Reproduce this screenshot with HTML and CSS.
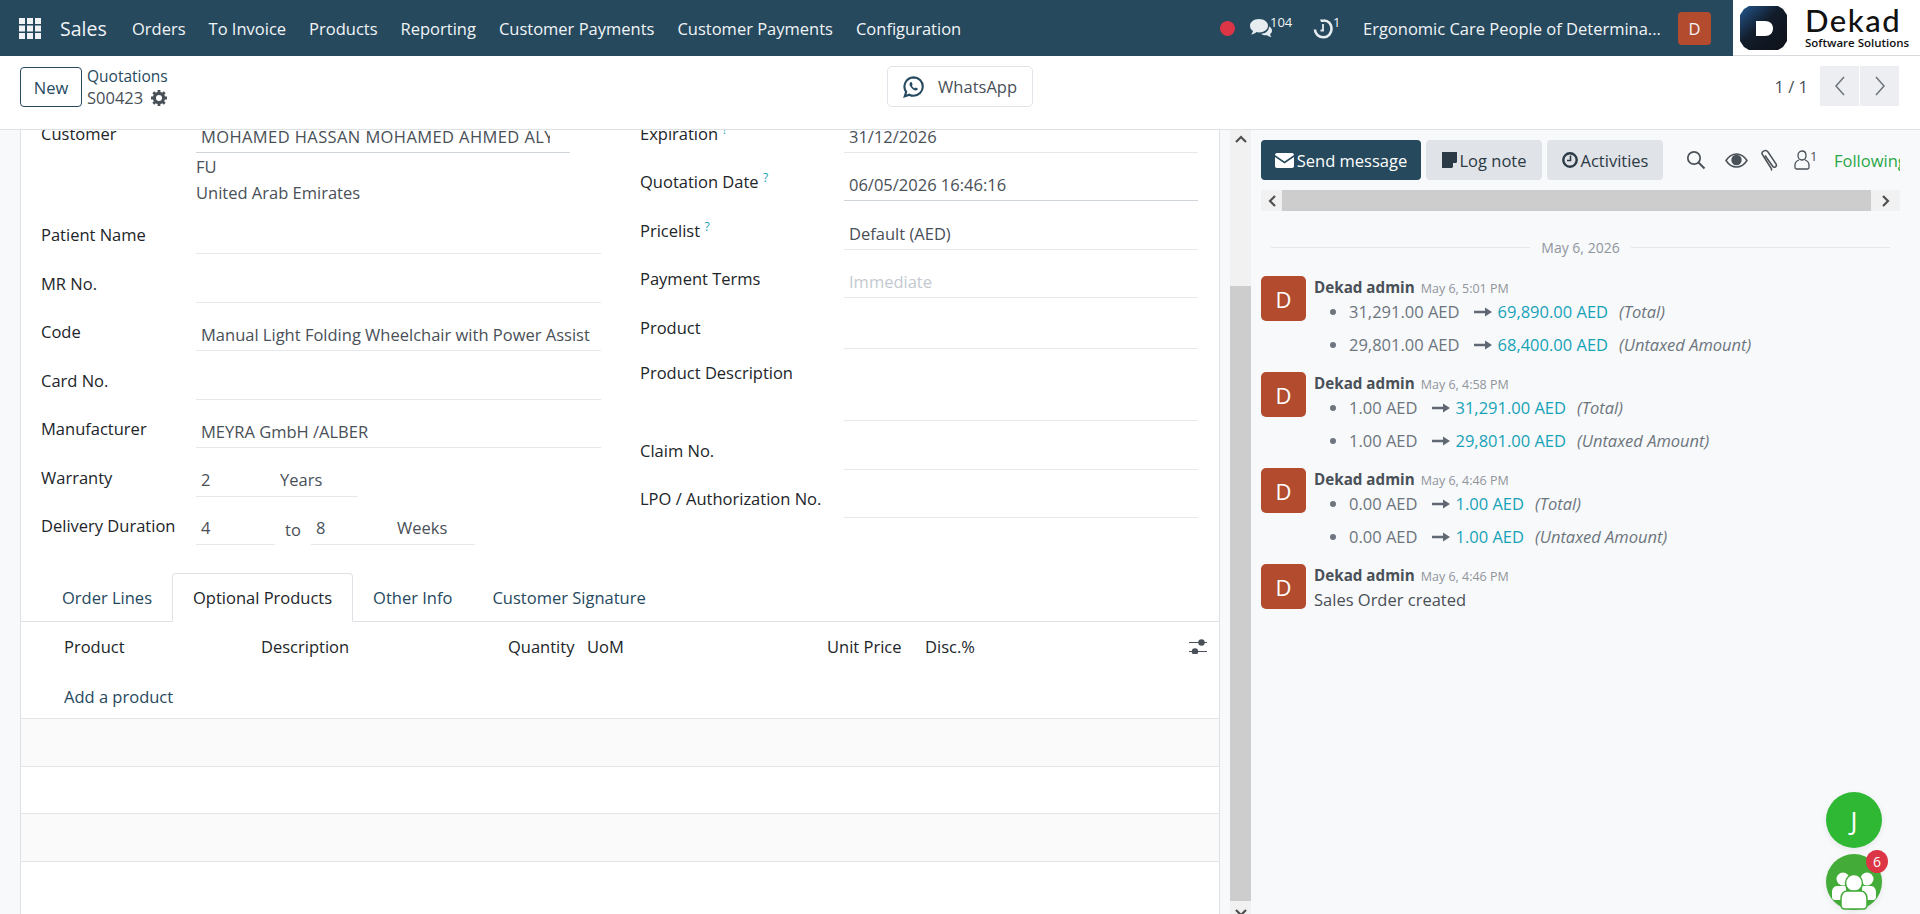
FILE: index.html
```html
<!DOCTYPE html>
<html>
<head>
    <title>S00423 - Sales</title>
    <meta charset="UTF-8" />
    <link rel="stylesheet" href="styles.css">
</head>
<body>
    <svg class="defs" width="0" height="0">
        <symbol id="arrow" viewBox="0 0 18 12"><path d="M0 4.800h11V1.500L18 6l-7 4.500V7.200H0z" fill="#5f6873"/></symbol>
    </svg>

    <header class="navbar">
        <svg class="apps" width="22" height="21" viewBox="0 0 22 21"><path fill="#f1f4f6" d="M0 0h6v6H0zM8 0h6v6H8zM16 0h6v6h-6zM0 7.500h6v6H0zM8 7.500h6v6H8zM16 7.500h6v6h-6zM0 15h6v6H0zM8 15h6v6H8zM16 15h6v6h-6z"/></svg>
        <a class="brand">Sales</a>
        <nav class="menu">
            <a>Orders</a>
            <a>To Invoice</a>
            <a>Products</a>
            <a>Reporting</a>
            <a>Customer Payments</a>
            <a>Customer Payments</a>
            <a>Configuration</a>
        </nav>
        <div class="systray">
            <span class="dot"></span>
            <span class="tray msgs">
                <svg width="24" height="20" viewBox="0 0 24 20"><path fill="#e6ecef" d="M10 1c5 0 9 2.900 9 6.700s-4 6.700-9 6.700c-1 0-1.700-.1-2.500-.3C6 15.500 4 16.300 2 16.500c1-1 1.800-2.200 2-3.500C2 11.700 1 9.800 1 7.700 1 3.900 5 1 10 1z"/><path fill="#e6ecef" d="M20 8.500c2 1 3 2.500 3 4.200 0 1.400-.8 2.700-2 3.600.2 1 .8 2 1.600 2.700-1.800-.2-3.300-.9-4.500-1.800-2 .3-4.500-.1-6-1.500 4 0 8-2.500 7.900-7.200z"/></svg>
                <sup>104</sup>
            </span>
            <span class="tray activity">
                <svg width="20" height="21" viewBox="0 0 20 21"><path fill="none" stroke="#e6ecef" stroke-width="2.600" d="M11 2.500c4.500 0 7.500 3.500 7.500 8a8.300 8.300 0 0 1-16.600 1"/><path fill="none" stroke="#e6ecef" stroke-width="1.800" d="M10 6v6.500H7.500"/><path fill="#e6ecef" d="M7 1.500h4v2.500H8z"/></svg>
                <sup>1</sup>
            </span>
            <span class="company">Ergonomic Care People of Determina...</span>
            <span class="avatar-small">D</span>
        </div>
        <div class="logo">
            <svg width="47" height="44" viewBox="0 0 47 44">
                <defs><linearGradient id="lg" x1="0" y1="0" x2="1" y2="1"><stop offset="0" stop-color="#24588f"/><stop offset=".45" stop-color="#121c2a"/><stop offset="1" stop-color="#0e1118"/></linearGradient></defs>
                <path fill="url(#lg)" d="M9 0h29l5 3 4 6v26l-4 6-5 3H9l-5-3-4-6V9l4-6z"/>
                <path fill="#fff" d="M16 15h9c5 0 8 3 8 7.500S30 30 25 30h-9z"/>
            </svg>
            <div class="logo-text">
                <div class="logo-name">Dekad</div>
                <div class="logo-sub">Software Solutions</div>
            </div>
        </div>
    </header>

    <div class="control-panel">
        <div class="cp-left">
            <button class="btn-new">New</button>
            <div class="crumbs">
                <div class="crumb-parent">Quotations</div>
                <div class="crumb-current">S00423
                    <svg width="16" height="16" viewBox="0 0 16 16"><circle cx="8" cy="8" r="4.600" fill="none" stroke="#495057" stroke-width="3.200"/><path stroke="#495057" stroke-width="2.800" d="M8 0v3M8 13v3M0 8h3M13 8h3M2.300 2.300l2 2M11.700 11.700l2 2M2.300 13.700l2-2M11.700 4.300l2-2"/></svg>
                </div>
            </div>
        </div>
        <button class="btn-whatsapp">
            <svg width="24" height="26" viewBox="0 0 24 26"><path fill="none" stroke="#264a5f" stroke-width="2.400" d="M12 2a10.500 10.500 0 0 1 0 21c-1.800 0-3.400-.4-4.800-1.200L2 23.500l1.600-5A10.500 10.500 0 0 1 12 2z"/><path fill="#264a5f" d="M8.500 7.500c-1.500 1-1.500 3 .3 5.500s4.500 4.500 6.700 3.800c1-.3 1.500-1.300 1.300-2l-2.500-1.300-1 1c-1-.3-2.800-2-3.200-3.300l.9-1L9.700 7.400c-.4-.2-.9-.1-1.200.1z"/></svg>
            WhatsApp
        </button>
        <div class="pager">
            <span class="pager-count">1 / 1</span>
            <span class="pager-btn"><svg width="12" height="20" viewBox="0 0 12 20"><path fill="none" stroke="#6c757d" stroke-width="1.500" d="M10 1L2 10l8 9"/></svg></span>
            <span class="pager-btn"><svg width="12" height="20" viewBox="0 0 12 20"><path fill="none" stroke="#6c757d" stroke-width="1.500" d="M2 1l8 9-8 9"/></svg></span>
        </div>
    </div>

    <div class="content">
        <main class="form-view">
            <div class="sheet">
                <div class="groups">
                    <div class="group group-left">
                        <div class="field"><label>Customer</label><div class="value focus short"><span class="clip">MOHAMED HASSAN MOHAMED AHMED ALY</span></div></div>
                        <div class="address"><div>FU</div><div>United Arab Emirates</div></div>
                        <div class="field"><label>Patient Name</label><div class="value"></div></div>
                        <div class="field"><label>MR No.</label><div class="value"></div></div>
                        <div class="field"><label>Code</label><div class="value">Manual Light Folding Wheelchair with Power Assist</div></div>
                        <div class="field"><label>Card No.</label><div class="value"></div></div>
                        <div class="field"><label>Manufacturer</label><div class="value">MEYRA GmbH /ALBER</div></div>
                        <div class="field"><label>Warranty</label>
                            <div class="value v-num">2</div>
                            <div class="value v-unit">Years</div>
                        </div>
                        <div class="field"><label>Delivery Duration</label>
                            <div class="value v-from">4</div>
                            <span class="to">to</span>
                            <div class="value v-to">8</div>
                            <div class="value v-weeks">Weeks</div>
                        </div>
                    </div>
                    <div class="group group-right">
                        <div class="field"><label>Expiration <sup class="help">?</sup></label><div class="value">31/12/2026</div></div>
                        <div class="field"><label>Quotation Date <sup class="help">?</sup></label><div class="value focus">06/05/2026 16:46:16</div></div>
                        <div class="field"><label>Pricelist <sup class="help">?</sup></label><div class="value">Default (AED)</div></div>
                        <div class="field field-terms"><label>Payment Terms</label><div class="value placeholder">Immediate</div></div>
                        <div class="field field-product"><label>Product</label><div class="value"></div></div>
                        <div class="field field-desc"><label>Product Description</label><div class="value"></div></div>
                        <div class="field field-claim"><label>Claim No.</label><div class="value"></div></div>
                        <div class="field field-claim"><label>LPO / Authorization No.</label><div class="value"></div></div>
                    </div>
                </div>

                <div class="tabs">
                    <a>Order Lines</a>
                    <a class="active">Optional Products</a>
                    <a>Other Info</a>
                    <a>Customer Signature</a>
                </div>

                <div class="table-head">
                    <span class="col-product">Product</span>
                    <span class="col-desc">Description</span>
                    <span class="col-qty">Quantity</span>
                    <span class="col-uom">UoM</span>
                    <span class="col-price">Unit Price</span>
                    <span class="col-disc">Disc.%</span>
                    <svg class="col-opts" width="19" height="15" viewBox="0 0 19 15"><path stroke="#495057" stroke-width="1" d="M0 3.500h18M0 12.500h18"/><circle cx="12.500" cy="3.500" r="3.200" fill="#495057"/><circle cx="6" cy="12.500" r="3.200" fill="#495057"/></svg>
                </div>
                <div class="add-line"><a>Add a product</a></div>
                <div class="row row-odd"></div>
                <div class="row"></div>
                <div class="row row-odd"></div>
                <div class="row row-last"></div>
            </div>
        </main>

        <div class="scrollbar">
            <span class="sb-up"><svg width="12" height="8" viewBox="0 0 12 8"><path fill="none" stroke="#505050" stroke-width="2.200" d="M1 7l5-5 5 5"/></svg></span>
            <div class="sb-gap"></div>
            <div class="sb-thumb"></div>
            <span class="sb-down"><svg width="12" height="8" viewBox="0 0 12 8"><path fill="none" stroke="#505050" stroke-width="2.200" d="M1 1l5 5 5-5"/></svg></span>
        </div>

        <aside class="chatter">
            <div class="chatter-top">
                <button class="btn-chat btn-send">
                    <svg width="19" height="15" viewBox="0 0 19 15"><path fill="#fff" d="M0 2c0-1 .8-2 2-2h15c1.200 0 2 1 2 2L9.500 8.500zM0 4l9.500 6.500L19 4v9c0 1-.8 2-2 2H2c-1.200 0-2-1-2-2z"/></svg>
                    Send message</button>
                <button class="btn-chat">
                    <svg width="15" height="16" viewBox="0 0 15 16"><path fill="#2b3a45" d="M0 0h15v10l-5 6H0z"/><path fill="#e0e3e7" d="M11 16v-5h4z"/></svg>
                    Log note</button>
                <button class="btn-chat">
                    <svg width="16" height="16" viewBox="0 0 16 16"><circle cx="8" cy="8" r="6.700" fill="none" stroke="#2b3a45" stroke-width="2.400"/><path fill="none" stroke="#2b3a45" stroke-width="1.600" d="M8.500 3.500v5H5"/></svg>
                    Activities</button>
                <div class="chat-tools">
                    <svg class="t-search" width="20" height="20" viewBox="0 0 20 20"><circle cx="8" cy="8" r="6.200" fill="none" stroke="#495057" stroke-width="1.700"/><path stroke="#495057" stroke-width="2" d="M12.500 12.500l6 6"/></svg>
                    <svg class="t-eye" width="23" height="15" viewBox="0 0 23 15"><path fill="none" stroke="#495057" stroke-width="1.500" d="M1 7.500C4 3 7.500 1 11.500 1s7.500 2 10.500 6.500C19 12 15.500 14 11.500 14S4 12 1 7.500z"/><circle cx="11.500" cy="7" r="5.200" fill="#495057"/></svg>
                    <svg class="t-clip" width="20" height="23" viewBox="0 0 20 23"><path fill="none" stroke="#495057" stroke-width="1.500" d="M6 6.500l7.500 10.500c1.800 2.500 5 .5 3.500-2.200L9 3C7 .3 2.500 2 3 5l8 12.500c1 1.500 2.500 3 1 4"/></svg>
                    <span class="t-user">
                        <svg width="16" height="20" viewBox="0 0 16 20"><path fill="none" stroke="#495057" stroke-width="1.300" d="M8 1c2.500 0 4 2 4 4.500S10.500 10 8 10 4 8 4 5.500 5.500 1 8 1zM5 10c-2.500 1-4 2.500-4 5v2.500c0 .8.500 1.500 1.500 1.500h11c1 0 1.500-.7 1.500-1.500V15c0-2.500-1.500-4-4-5"/></svg>
                        <sup>1</sup>
                    </span>
                    <span class="following">Following</span>
                </div>
            </div>

            <div class="h-scroll">
                <span class="hs-btn"><svg width="8" height="12" viewBox="0 0 8 12"><path fill="none" stroke="#505050" stroke-width="2.200" d="M7 1L2 6l5 5"/></svg></span>
                <div class="hs-thumb"></div>
                <span class="hs-btn hs-right"><svg width="8" height="12" viewBox="0 0 8 12"><path fill="none" stroke="#505050" stroke-width="2.200" d="M1 1l5 5-5 5"/></svg></span>
            </div>

            <div class="date-sep"><span>May 6, 2026</span></div>

            <div class="message">
                <div class="msg-avatar">D</div>
                <div class="msg-body">
                    <div class="msg-head"><b>Dekad admin</b><span>May 6, 5:01 PM</span></div>
                    <ul>
                        <li><span class="old">31,291.00 AED</span><svg class="arr"><use href="#arrow"/></svg><span class="new">69,890.00 AED</span><i>(Total)</i></li>
                        <li><span class="old">29,801.00 AED</span><svg class="arr"><use href="#arrow"/></svg><span class="new">68,400.00 AED</span><i>(Untaxed Amount)</i></li>
                    </ul>
                </div>
            </div>
            <div class="message">
                <div class="msg-avatar">D</div>
                <div class="msg-body">
                    <div class="msg-head"><b>Dekad admin</b><span>May 6, 4:58 PM</span></div>
                    <ul>
                        <li><span class="old">1.00 AED</span><svg class="arr"><use href="#arrow"/></svg><span class="new">31,291.00 AED</span><i>(Total)</i></li>
                        <li><span class="old">1.00 AED</span><svg class="arr"><use href="#arrow"/></svg><span class="new">29,801.00 AED</span><i>(Untaxed Amount)</i></li>
                    </ul>
                </div>
            </div>
            <div class="message">
                <div class="msg-avatar">D</div>
                <div class="msg-body">
                    <div class="msg-head"><b>Dekad admin</b><span>May 6, 4:46 PM</span></div>
                    <ul>
                        <li><span class="old">0.00 AED</span><svg class="arr"><use href="#arrow"/></svg><span class="new">1.00 AED</span><i>(Total)</i></li>
                        <li><span class="old">0.00 AED</span><svg class="arr"><use href="#arrow"/></svg><span class="new">1.00 AED</span><i>(Untaxed Amount)</i></li>
                    </ul>
                </div>
            </div>
            <div class="message">
                <div class="msg-avatar">D</div>
                <div class="msg-body">
                    <div class="msg-head"><b>Dekad admin</b><span>May 6, 4:46 PM</span></div>
                    <div class="msg-text">Sales Order created</div>
                </div>
            </div>
        </aside>
    </div>

    <div class="fab fab-j">J</div>
    <div class="fab fab-group">
        <svg width="48" height="44" viewBox="0 0 48 44">
            <circle cx="13" cy="13" r="6.500" fill="#fff"/>
            <circle cx="37" cy="13" r="6.500" fill="#fff"/>
            <path fill="#fff" d="M7 20h9v14H5c-2 0-3-1-3-3v-5c0-3 2-6 5-6zM32 20h9c3 0 5 3 5 6v5c0 2-1 3-3 3H32z"/>
            <circle cx="24" cy="17" r="8.500" fill="#fff" stroke="#43ab38" stroke-width="1.500"/>
            <path fill="#fff" stroke="#43ab38" stroke-width="1.500" d="M17 25h14c4 0 6 4 6 8v6c0 2-1 4-4 4H15c-3 0-4-2-4-4v-6c0-4 2-8 6-8z"/>
        </svg>
        <span class="fab-badge">6</span>
    </div>
</body>
</html>
```

FILE: styles.css
```css
* {
    box-sizing: border-box;
}

html, body {
    height: 100%;
}

body {
    margin: 0;
    height: 914px;
    overflow: hidden;
    display: flex;
    flex-direction: column;
    font-family: "Open Sans", "Noto Sans", sans-serif;
    font-size: 16.500px;
    color: #212529;
    background: #f8f9fb;
}

.defs {
    position: absolute;
}

sup {
    font-size: 13px;
    line-height: 1;
}

/* top bar */
.navbar {
    display: flex;
    align-items: center;
    height: 56px;
    flex: none;
    background: #26495e;
    color: #f1f4f6;
    padding-left: 19px;
}

.brand {
    font-size: 19.500px;
    margin-left: 19px;
    width: 72px;
}

.menu {
    display: flex;
    gap: 23px;
    font-size: 16.500px;
}

.systray {
    display: flex;
    align-items: center;
    margin-left: auto;
}

.dot {
    width: 15px;
    height: 15px;
    border-radius: 50%;
    background: #dc3545;
    margin-right: 14px;
}

.tray {
    display: flex;
    align-items: flex-start;
}

.msgs {
    width: 64px;
}

.msgs sup {
    margin-left: -3px;
}

.activity {
    width: 50px;
}

.tray sup {
    margin-top: -2px;
}

.company {
    width: 315px;
    white-space: nowrap;
}

.avatar-small {
    width: 33px;
    height: 33px;
    border-radius: 4px;
    background: #b34c2f;
    display: flex;
    align-items: center;
    justify-content: center;
}

.logo {
    display: flex;
    align-items: center;
    width: 187px;
    height: 56px;
    margin-left: 22px;
    padding-left: 7px;
    background: #fff;
    border-bottom: 1px solid #d8dadd;
    color: #111;
}

.logo-text {
    margin-left: 18px;
}

.logo-name {
    font-size: 31px;
    line-height: 30px;
    letter-spacing: 1.500px;
    font-family: "Lato", sans-serif;
    font-weight: 500;
}

.logo-sub {
    font-size: 11.500px;
    font-weight: 600;
    line-height: 15px;
    white-space: nowrap;
}

/* control panel */
.control-panel {
    display: flex;
    height: 74px;
    flex: none;
    align-items: flex-start;
    padding-top: 10px;
    background: #fff;
    border-bottom: 1px solid #dee2e6;
}

.cp-left {
    display: flex;
    width: 887px;
    padding-left: 20px;
}

.btn-new {
    width: 62px;
    height: 40px;
    padding: 0;
    font: inherit;
    color: #26495e;
    background: #fff;
    border: 1px solid #26495e;
    border-radius: 4px;
    margin-top: 1px;
}

.crumbs {
    margin-left: 5px;
    color: #26495e;
}

.crumb-parent {
    font-size: 15.500px;
    line-height: 21px;
}

.crumb-current {
    color: #495057;
    display: flex;
    align-items: center;
    gap: 8px;
    line-height: 22px;
}

.btn-whatsapp {
    display: flex;
    align-items: center;
    gap: 14px;
    width: 146px;
    height: 41px;
    padding: 0 15px;
    font: inherit;
    color: #495057;
    background: #fff;
    border: 1px solid #e2e4ea;
    border-radius: 5px;
}

.pager {
    display: flex;
    align-items: center;
    margin-left: auto;
    margin-right: 21px;
    height: 40px;
    gap: 1px;
    color: #495057;
}

.pager-count {
    margin-right: 11px;
}

.pager-btn {
    width: 39px;
    height: 40px;
    background: #eceef1;
    display: flex;
    align-items: center;
    justify-content: center;
}

/* main area */
.content {
    flex: 1;
    display: flex;
    min-height: 0;
    overflow: hidden;
}

.form-view {
    width: 1230px;
    flex: none;
    padding-left: 20px;
    overflow: hidden;
}

.sheet {
    width: 1200px;
    margin-top: -8px;
    background: #fff;
    border-left: 1px solid #dee2e6;
    border-right: 1px solid #dee2e6;
    height: 800px;
}

.groups {
    display: flex;
    height: 444px;
    padding-left: 20px;
}

.group-left {
    width: 560px;
}

.group-right {
    margin-left: 39px;
    width: 558px;
}

.field {
    display: flex;
    height: 48.500px;
}

.group-right .field {
    height: 48.300px;
}

label {
    flex: none;
    width: 155px;
    line-height: 24px;
    white-space: nowrap;
}

.group-right label {
    width: 204px;
}

.help {
    color: #17a2b8;
    font-size: 12px;
    vertical-align: 6px;
}

.value {
    flex: 1;
    height: 31px;
    padding: 3px 5px 0;
    line-height: 24px;
    color: #495057;
    border-bottom: 1px solid #e6e8eb;
    white-space: nowrap;
    overflow: hidden;
}

.value.focus {
    border-bottom-color: #ced4da;
}

.value.short {
    flex: none;
    width: 374px;
    padding-right: 20px;
}

.clip {
    display: block;
    overflow: hidden;
    letter-spacing: 0.400px;
}

.value.placeholder {
    color: #c3c9d0;
}

.address {
    height: 70px;
    padding: 1px 0 0 155px;
    margin-top: -17.500px;
    line-height: 26px;
    color: #495057;
}

.value.v-num, .value.v-unit, .value.v-from, .value.v-to, .value.v-weeks {
    flex: none;
    padding-top: 2px;
}

.value.v-num {
    width: 79px;
}

.value.v-unit {
    width: 83px;
}

.value.v-from {
    width: 79px;
}

.to {
    width: 36px;
    padding-left: 10px;
    line-height: 32px;
    color: #495057;
}

.value.v-to {
    width: 81px;
}

.value.v-weeks {
    width: 83px;
}

.group-right .field-terms {
    height: 51px;
}

.group-right .field-product {
    height: 43px;
}

.field-product label {
    line-height: 20px;
}

.group-right .field-desc {
    height: 78px;
}

.field-desc .value {
    height: 60px;
}

.group-right .field-claim {
    height: 48.500px;
}

/* tabs */
.tabs {
    display: flex;
    height: 49px;
    padding-left: 21px;
    margin-top: 7px;
    border-bottom: 1px solid #dee2e6;
    color: #26495e;
}

.tabs a {
    padding: 0 20px;
    line-height: 49px;
    height: 49px;
    white-space: nowrap;
}

.tabs .active {
    color: #212529;
    background: #fff;
    border: 1px solid #dee2e6;
    border-bottom-color: #fff;
    border-radius: 4px 4px 0 0;
    line-height: 47px;
}

/* lines table */
.table-head {
    display: flex;
    align-items: center;
    height: 49px;
    color: #212529;
}

.col-product {
    margin-left: 43px;
    width: 197px;
}

.col-desc {
    width: 247px;
}

.col-qty {
    width: 79px;
}

.col-uom {
    width: 240px;
}

.col-price {
    width: 98px;
}

.col-disc {
    width: 264px;
}

.add-line {
    height: 48px;
    padding: 5px 0 0 43px;
    line-height: 42px;
    color: #26495e;
    border-bottom: 1px solid #e4e4e7;
}

.row {
    height: 47.500px;
    border-bottom: 1px solid #e4e4e7;
}

.row-odd {
    background: #fafafa;
}

.row-last {
    border-bottom: none;
}

/* page scrollbar */
.scrollbar {
    width: 21px;
    flex: none;
    display: flex;
    flex-direction: column;
    background: #f1f1f1;
}

.sb-up, .sb-down {
    height: 18px;
    display: flex;
    align-items: center;
    justify-content: center;
    flex: none;
}

.sb-down {
    height: 13px;
    align-items: flex-start;
    padding-top: 8px;
}

.sb-gap {
    height: 138px;
    flex: none;
}

.sb-thumb {
    flex: 1;
    background: #cdcdcd;
}

/* chatter */
.chatter {
    flex: 1;
    padding: 10px 20px 0 10px;
    background: #f8f9fb;
    min-width: 0;
}

.chatter-top {
    display: flex;
    align-items: center;
    gap: 5px;
    height: 40px;
}

.btn-chat {
    display: flex;
    align-items: center;
    justify-content: center;
    gap: 3px;
    height: 40px;
    width: 116px;
    flex: none;
    padding: 0;
    font: inherit;
    color: #2b3a45;
    background: #e0e3e7;
    border: none;
    border-radius: 4px;
    white-space: nowrap;
}

.btn-send {
    width: 160px;
    background: #26495e;
    color: #fff;
}

.chat-tools {
    display: flex;
    align-items: center;
    flex: 1;
    min-width: 0;
    margin-left: 18px;
    overflow: hidden;
    white-space: nowrap;
}

.chat-tools > * {
    flex: none;
}

.t-eye {
    margin-left: 19px;
}

.t-clip {
    margin-left: 11px;
}

.t-user {
    display: flex;
    align-items: flex-start;
    margin-left: 15px;
    width: 40px;
    color: #495057;
}

.following {
    color: #28a745;
}

.h-scroll {
    display: flex;
    height: 21px;
    margin-top: 10px;
    background: #f1f1f1;
}

.hs-btn {
    width: 21px;
    display: flex;
    align-items: center;
    justify-content: center;
}

.hs-right {
    width: 29px;
}

.hs-thumb {
    flex: 1;
    background: #cdcdcd;
}

.date-sep {
    display: flex;
    align-items: center;
    gap: 11px;
    height: 24px;
    margin: 24px 10px 17px;
    font-size: 14px;
    color: #8f959c;
}

.date-sep::before, .date-sep::after {
    content: "";
    flex: 1;
    height: 1px;
    background: #e4e7ea;
}

.message {
    display: flex;
    height: 96px;
}

.msg-avatar {
    width: 45px;
    height: 45px;
    flex: none;
    border-radius: 5px;
    background: #b34c2f;
    color: #fff;
    font-size: 22px;
    display: flex;
    align-items: center;
    justify-content: center;
}

.msg-body {
    margin-left: 8px;
    padding-top: 1px;
    color: #495057;
}

.msg-head {
    line-height: 20px;
}

.msg-head b {
    font-weight: 700;
    font-size: 15.200px;
}

.msg-head span {
    margin-left: 6px;
    font-size: 12.500px;
    color: #8f959c;
}

.msg-body ul {
    margin: -2px 0 0;
    padding-left: 35px;
    color: #6c757d;
}

.msg-body li {
    height: 32px;
    line-height: 30px;
    white-space: nowrap;
}

.msg-body li:first-child {
    height: 33px;
}

.arr {
    width: 18px;
    height: 12px;
    margin: 0 6px 0 14px;
}

.new {
    color: #17a2b8;
}

.msg-body i {
    margin-left: 11px;
    font-style: italic;
}

.msg-text {
    line-height: 30px;
    margin-top: -2px;
}

/* floating buttons */
.fab {
    position: absolute;
    left: 1826px;
    width: 56px;
    height: 56px;
    border-radius: 50%;
    color: #fff;
    display: flex;
    align-items: center;
    justify-content: center;
    box-shadow: 0 2px 6px rgba(0,0,0,0.08);
}

.fab-j {
    top: 792px;
    background: #2eb834;
    font-size: 26px;
}

.fab-group {
    top: 854px;
    background: #43ab38;
    align-items: flex-end;
}

.fab-badge {
    position: absolute;
    left: 40px;
    top: -4px;
    width: 22px;
    height: 23px;
    border-radius: 50%;
    background: #dc3545;
    font-size: 14px;
    display: flex;
    align-items: center;
    justify-content: center;
}
```
